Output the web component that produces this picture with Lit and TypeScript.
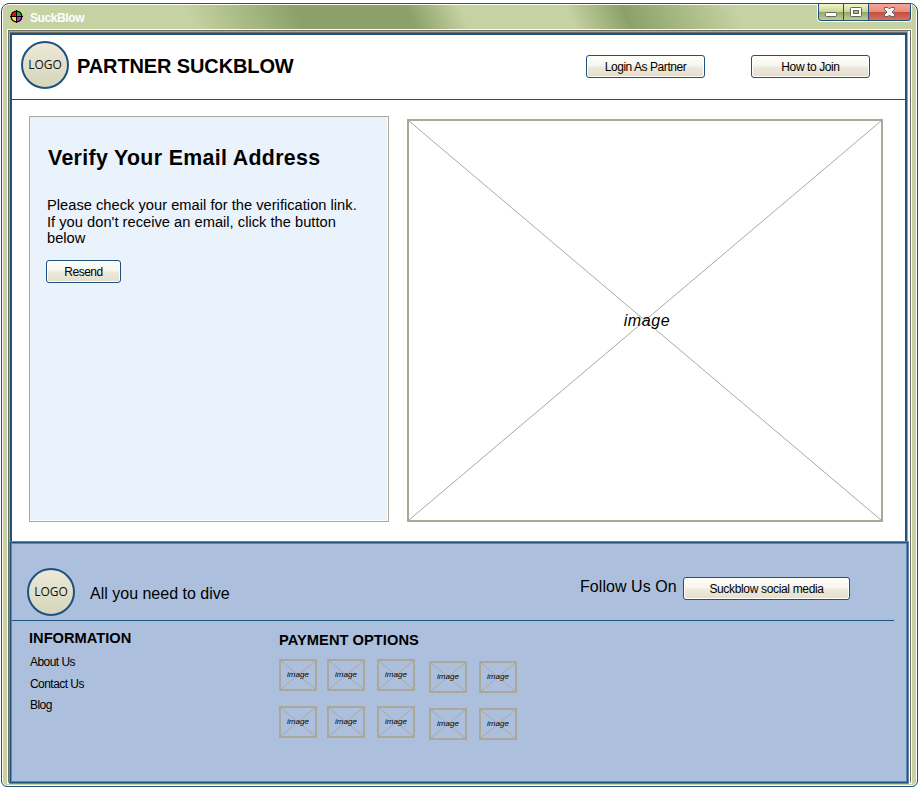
import { LitElement, html, css } from "lit";
import { customElement, property } from "lit/decorators.js";

@customElement("image-box")
class ImageBox extends LitElement {
  static styles = css`
    :host { display: grid; box-sizing: border-box; border: 2px solid #aca899; overflow: hidden; }
    svg, span { grid-area: 1 / 1; }
    svg { width: 100%; height: 100%; min-height: 0; display: block; }
    line { stroke: #aca899; stroke-width: 1; vector-effect: non-scaling-stroke; }
    span { place-self: center; font-style: italic; line-height: 1; z-index: 1; }
  `;
  render() {
    return html`<svg viewBox="0 0 100 100" preserveAspectRatio="none">
        <line x1="0" y1="0" x2="100" y2="100"></line>
        <line x1="100" y1="0" x2="0" y2="100"></line>
      </svg><span>image</span>`;
  }
}

@customElement("push-button")
class PushButton extends LitElement {
  @property() label = "";
  static styles = css`
    :host { display: block; }
    button {
      display: block; width: 100%; height: 23px; box-sizing: border-box; padding: 1px 0 0; margin: 0;
      border: 1px solid #1c5180; border-radius: 3px;
      background: linear-gradient(#fffffb, #f6f5ee 48%, #ede9dc 52%, #e5decb);
      box-shadow: inset 0 0 0 1px #fffefa;
      font: 12px/21px "Liberation Sans", Arial, sans-serif; letter-spacing: inherit; color: #000;
      white-space: nowrap;
    }
  `;
  render() {
    return html`<button>${this.label}</button>`;
  }
}

@customElement("app-root")
class AppRoot extends LitElement {
  static styles = css`
    :host {
      display: block; box-sizing: border-box; width: 920px; height: 788px; padding: 3px 2px 1px 1px;
      background: #fff; overflow: hidden; color: #000;
      font-family: "Liberation Sans", Arial, sans-serif;
    }
    * { box-sizing: border-box; }
    h1, h2, h3, p { margin: 0; white-space: nowrap; }
    .window {
      width: 917px; height: 784px; border: 1px solid #1c5180; border-radius: 8px 8px 6px 6px;
      background: #c6d2a2; box-shadow: inset 0 0 0 1px #fff; padding: 1px; overflow: hidden;
    }
    .titlebar {
      height: 24px; display: flex; align-items: flex-start; border-radius: 6px 6px 0 0; padding-left: 7px;
      background: linear-gradient(67deg, #c6d2a2 176px, #8ba169 278px, #8ba169 379px, #c6d2a2 430px,
        #c6d2a2 526px, #8ba169 579px, #c6d2a2 683px);
    }
    .appicon { margin-top: 5px; width: 13px; height: 13px; }
    .apptitle { margin: 6px 0 0 7px; font: bold 12px/15px "Liberation Sans", Arial, sans-serif; letter-spacing: -0.4px; color: #fff; flex: 1; }
    .controls { width: 95px; height: 18px; margin: -1px 4px 0 0; }
    .frame { margin: 0 4px 0 4px; height: 755px; border: 1px solid #fff; }
    .frame-mid { height: 753px; border: 1px solid #716f64; border-bottom-color: #f1efe2; background: #fdfbf5; padding: 1px 2px 0 1px; }
    .page { height: 751px; width: 897px; border-top: 1px solid #716f64; background: #fff; box-shadow: 0 0 0 1px #aca899; }
    .content { height: 509px; border: 2px solid #1c5180; border-bottom: 0; background: #fff; }
    .header { height: 65px; border-bottom: 1px solid #1c5180; display: flex; align-items: flex-start; padding-left: 9px; }
    .logo {
      width: 48px; height: 48px; border: 2px solid #1c5180; border-radius: 50%; flex: none;
      background: linear-gradient(#ece9d8, #d5d6ba); text-align: center;
      font: 12px/43px "Open Sans", "Noto Sans", sans-serif; color: #111;
    }
    .header .logo { margin-top: 6px; }
    .header h1 { margin: 19px 0 0 8px; font-size: 20px; line-height: 24px; width: 509px; letter-spacing: -0.12px; }
    .header push-button { width: 119px; margin-top: 20px; }
    .login { letter-spacing: -0.45px; }
    .join { margin-left: 46px; letter-spacing: -0.4px; }
    .main { display: flex; align-items: flex-start; padding: 16px 0 0 17px; }
    .verify {
      width: 360px; height: 406px; border: 1px solid #aca899; background: #eaf2fb; padding: 27px 0 0 16px;
      box-shadow: inset -1px -1px #fff;
    }
    .verify h2 { font-size: 21.33px; line-height: 28px; letter-spacing: 0.34px; padding-left: 2px; }
    .verify p { margin: 25px 0 13px 1px; font-size: 14.67px; line-height: 16.5px; letter-spacing: 0.02px; }
    .verify push-button { width: 75px; letter-spacing: -0.5px; }
    .hero { margin: 3px 0 0 18px; width: 476px; height: 403px; font-size: 16px; letter-spacing: 0.6px; text-indent: 4px; }
    .footer {
      height: 241px; width: 898px; border: 1px solid #1c5180; background: #acc0de; position: relative;
      box-shadow: 0 0 0 1px #6288b0, inset 0 0 0 1px #6288b0;
    }
    .brand { display: flex; align-items: flex-start; height: 78px; width: 882px; margin-left: 1px; border-bottom: 1px solid #1c5180; padding-left: 15px; }
    .brand .logo { margin-top: 24.500px; line-height: 43px; }
    .brand p { font-size: 16px; line-height: 20px; }
    .tagline { margin: 41px 0 0 15px; width: 490px; }
    .follow { margin-top: 34px; width: 103px; letter-spacing: 0.05px; }
    .brand push-button { margin-top: 34px; width: 167px; letter-spacing: -0.34px; }
    .columns { display: flex; padding-left: 18px; }
    .columns h3 { font-size: 14.67px; line-height: 18px; }
    .info { width: 250px; padding-top: 8px; }
    .info p { font-size: 12px; line-height: 16px; letter-spacing: -0.55px; padding-left: 1px; }
    .info h3 + p { margin-top: 7px; }
    .about { margin-bottom: 6px; }
    .contact { margin-bottom: 5px; }
    .pay { padding-top: 10px; }
    .pay h3 { letter-spacing: 0.04px; }
    .grid { margin-top: 10px; display: grid; grid-template-columns: 48px 50px 52px 50px 38px; grid-auto-rows: 32px; row-gap: 15px; }
    .grid image-box { width: 38px; height: 32px; font-size: 8px; color: #000; }
    .low { margin-top: 2px; }
  `;

  render() {
    const tiles = [0, 1, 2, 3, 4, 5, 6, 7, 8, 9];
    return html`
      <div class="window">
        <div class="titlebar">
          <svg class="appicon" viewBox="0 0 13 13">
            <path d="M6.5 6.5V1A5.500 5.500 0 0 0 1 6.500Z" fill="#d91414"></path>
            <path d="M6.500 6.500V1A5.500 5.500 0 0 1 12 6.500Z" fill="#25b02a"></path>
            <path d="M6.500 6.500H1A5.500 5.500 0 0 0 6.500 12Z" fill="#f2e23a"></path>
            <path d="M6.500 6.500H12A5.500 5.500 0 0 1 6.500 12Z" fill="#d51fd5"></path>
            <circle cx="6.500" cy="6.500" r="5.400" fill="none" stroke="#000" stroke-width="1.200"></circle>
            <path d="M6.500 0V13M0 6.500H13" stroke="#000"></path>
          </svg>
          <div class="apptitle">SuckBlow</div>
          <svg class="controls" viewBox="0 0 95 18">
            <defs>
              <linearGradient id="g" x1="0" y1="0" x2="0" y2="1">
                <stop offset="0" stop-color="#f4f6c8"></stop><stop offset=".47" stop-color="#c8d49b"></stop>
                <stop offset=".5" stop-color="#93a868"></stop><stop offset="1" stop-color="#c2d196"></stop>
              </linearGradient>
              <linearGradient id="r" x1="0" y1="0" x2="0" y2="1">
                <stop offset="0" stop-color="#f6a597"></stop><stop offset=".47" stop-color="#e98d80"></stop>
                <stop offset=".5" stop-color="#c2503f"></stop><stop offset="1" stop-color="#d9705f"></stop>
              </linearGradient>
            </defs>
            <path d="M.5 0V14.500Q.5 17.500 3.500 17.500H91.500Q94.500 17.500 94.500 14.500V0" fill="none" stroke="#fff"></path>
            <path d="M1.500 0V14Q1.500 16.500 4 16.500H26.500V0Z" fill="url(#g)"></path>
            <path d="M27 0H51.500V16.500H27Z" fill="url(#g)"></path>
            <path d="M52 0H93.500V14Q93.500 16.500 91 16.500H52Z" fill="url(#r)"></path>
            <path d="M1.500 0V14Q1.500 16.500 4 16.500H91Q93.500 16.500 93.500 14V0M26.500 0V16M51.500 0V16" fill="none" stroke="#1c5180"></path>
            <rect x="8.500" y="8.500" width="11" height="4" rx="1" fill="#fff" stroke="#66665e"></rect>
            <rect x="33.500" y="3.500" width="11" height="9" rx="1" fill="#fff" stroke="#66665e"></rect>
            <rect x="36.500" y="6.500" width="5" height="3" fill="#a9ba7c" stroke="#66665e"></rect>
            <path d="M67.500 3.500H71L72.500 5L74 3.500H77.500V5.500L75 8L77.500 10.500V12.500H74L72.500 11L71 12.500H67.500V10.500L70 8L67.500 5.500Z" fill="#f4f4f4" stroke="#66665e"></path>
          </svg>
        </div>
        <div class="frame"><div class="frame-mid"><div class="page">
          <div class="content">
            <div class="header">
              <div class="logo">LOGO</div>
              <h1>PARTNER SUCKBLOW</h1>
              <push-button class="login" label="Login As Partner"></push-button>
              <push-button class="join" label="How to Join"></push-button>
            </div>
            <div class="main">
              <div class="verify">
                <h2>Verify Your Email Address</h2>
                <p>Please check your email for the verification link.<br />If you don't receive an email, click the button<br />below</p>
                <push-button label="Resend"></push-button>
              </div>
              <image-box class="hero"></image-box>
            </div>
          </div>
          <div class="footer">
            <div class="brand">
              <div class="logo">LOGO</div>
              <p class="tagline">All you need to dive</p>
              <p class="follow">Follow Us On</p>
              <push-button label="Suckblow social media"></push-button>
            </div>
            <div class="columns">
              <div class="info">
                <h3>INFORMATION</h3>
                <p class="about">About Us</p>
                <p class="contact">Contact Us</p>
                <p>Blog</p>
              </div>
              <div class="pay">
                <h3>PAYMENT OPTIONS</h3>
                <div class="grid">
                  ${tiles.map((i) => html`<image-box class=${i % 5 > 2 ? "low" : ""}></image-box>`)}
                </div>
              </div>
            </div>
          </div>
        </div></div></div>
      </div>
    `;
  }
}
